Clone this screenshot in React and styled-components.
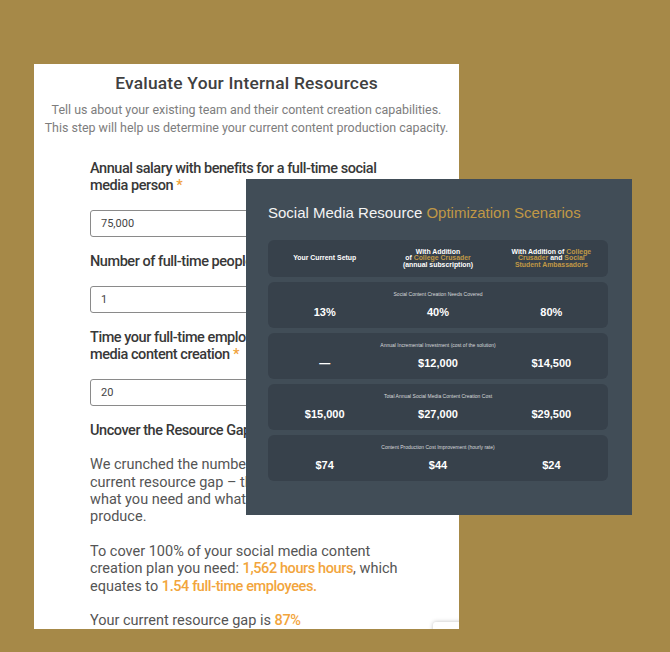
import React from 'react';
import styled, { createGlobalStyle } from 'styled-components';

const GlobalStyle = createGlobalStyle`
  html, body {
    margin: 0;
    padding: 0;
    background: #a68948;
  }
  * { box-sizing: border-box; }
`;

const rows = [
  { label: 'Social Content Creation Needs Covered', values: ['13%', '40%', '80%'] },
  { label: 'Annual Incremental Investment (cost of the solution)', values: ['—', '$12,000', '$14,500'] },
  { label: 'Total Annual Social Media Content Creation Cost', values: ['$15,000', '$27,000', '$29,500'] },
  { label: 'Content Production Cost Improvement (hourly rate)', values: ['$74', '$44', '$24'] },
];

function App() {
  return (
    <>
      <GlobalStyle />
      <Stage>
        <Card>
          <Title>Evaluate Your Internal Resources</Title>
          <Intro>
            Tell us about your existing team and their content creation capabilities.
            <br />
            This step will help us determine your current content production capacity.
          </Intro>
          <Form>
            <Label>Annual salary with benefits for a full-time social media person <Req>*</Req></Label>
            <Input defaultValue="75,000" />
            <Label>Number of full-time people on your team <Req>*</Req></Label>
            <Input defaultValue="1" />
            <Label>Time your full-time employees spend (%) on social media content creation <Req>*</Req></Label>
            <Input defaultValue="20" />
            <GapHeading>Uncover the Resource Gap</GapHeading>
            <Para>
              We crunched the numbers to calculate your current resource gap – the difference between
              what you need and what your team is able to produce.
            </Para>
            <Para>
              To cover 100% of your social media content creation plan you need:{' '}
              <Hi>1,562 hours hours</Hi>, which equates to <Hi>1.54 full-time employees.</Hi>
            </Para>
            <Para>
              Your current resource gap is <Hi>87%</Hi>
            </Para>
          </Form>
          <Badge />
        </Card>

        <Panel>
          <PanelTitle>
            Social Media Resource <Gold>Optimization Scenarios</Gold>
          </PanelTitle>
          <Rows>
            <HeadRow>
              <HeadCell>Your Current Setup</HeadCell>
              <HeadCell>
                With Addition<br />of <Gold>College Crusader</Gold><br />(annual subscription)
              </HeadCell>
              <HeadCell>
                With Addition of <Gold>College</Gold><br />
                <Gold>Crusader</Gold> and <Gold>Social</Gold><br />
                <Gold>Student Ambassadors</Gold>
              </HeadCell>
            </HeadRow>
            {rows.map((r) => (
              <DataRow key={r.label}>
                <RowLabel>{r.label}</RowLabel>
                <Values>
                  {r.values.map((v, i) => (
                    <Value key={i}>{v}</Value>
                  ))}
                </Values>
              </DataRow>
            ))}
          </Rows>
        </Panel>
      </Stage>
    </>
  );
}

export default App;

const Stage = styled.div`
  position: relative;
  width: 670px;
  height: 652px;
  overflow: hidden;
  padding: 64px 0 0 34px;
`;

const Card = styled.div`
  position: relative;
  width: 425px;
  height: 565px;
  background: #fff;
  overflow: hidden;
  padding-top: 9px;
  font-family: Roboto, "Liberation Sans", sans-serif;
`;

const Title = styled.h2`
  margin: 0;
  text-align: center;
  font-size: 17.4px;
  line-height: 20px;
  font-weight: 500;
  color: #404040;
  letter-spacing: 0.2px;
`;

const Intro = styled.p`
  margin: 8px 0 0;
  text-align: center;
  font-size: 12.45px;
  line-height: 17.6px;
  color: #7d7d7d;
  white-space: nowrap;
`;

const Form = styled.div`
  margin: 24px 56px 0;
`;

const Label = styled.div`
  font-size: 14.5px;
  line-height: 17px;
  font-weight: 500;
  color: #383838;
  letter-spacing: -0.45px;
  margin-bottom: 16px;
`;

const GapHeading = styled(Label)`
  margin-top: 1px;
  margin-bottom: 17px;
`;

const Req = styled.span`
  color: #f0a23a;
`;

const Input = styled.input`
  display: block;
  width: 100%;
  height: 27px;
  border: 1px solid #8a8a8a;
  border-radius: 3px;
  padding: 0 10px;
  font-family: Roboto, sans-serif;
  font-size: 11px;
  color: #444;
  margin-bottom: 16px;
  outline: none;
`;

const Para = styled.p`
  margin: 0 0 17px;
  font-size: 14.5px;
  line-height: 17.4px;
  color: #555;
`;

const Hi = styled.span`
  color: #f2a53c;
  font-weight: 500;
  letter-spacing: -0.4px;
`;

const Badge = styled.div`
  position: absolute;
  left: 399px;
  top: 558px;
  width: 70px;
  height: 60px;
  background: #fff;
  border-radius: 3px;
  box-shadow: 0 0 4px rgba(0, 0, 0, 0.25);
`;

const Panel = styled.div`
  position: absolute;
  left: 246px;
  top: 179px;
  width: 386px;
  height: 336px;
  background: #414d57;
  padding: 25px 24px 0 22px;
  font-family: "Liberation Sans", Arial, sans-serif;
  color: #fff;
`;

const PanelTitle = styled.div`
  font-size: 15px;
  line-height: 18px;
  color: #f4f4f4;
`;

const Gold = styled.span`
  color: #c09846;
`;

const Rows = styled.div`
  margin-top: 18px;
  display: flex;
  flex-direction: column;
  gap: 5px;
`;

const HeadRow = styled.div`
  display: grid;
  grid-template-columns: repeat(3, 1fr);
  align-items: center;
  height: 37px;
  background: #37414b;
  border-radius: 6px;
`;

const HeadCell = styled.div`
  text-align: center;
  font-size: 6.9px;
  line-height: 6.2px;
  font-weight: 700;
  color: #fff;
`;

const DataRow = styled.div`
  height: 46px;
  background: #37414b;
  border-radius: 6px;
  padding-top: 9px;
`;

const RowLabel = styled.div`
  text-align: center;
  font-size: 5px;
  line-height: 6px;
  color: #d8dadc;
  margin-bottom: 9px;
`;

const Values = styled.div`
  display: grid;
  grid-template-columns: repeat(3, 1fr);
`;

const Value = styled.div`
  text-align: center;
  font-size: 11px;
  line-height: 13px;
  font-weight: 700;
  color: #fff;
`;
